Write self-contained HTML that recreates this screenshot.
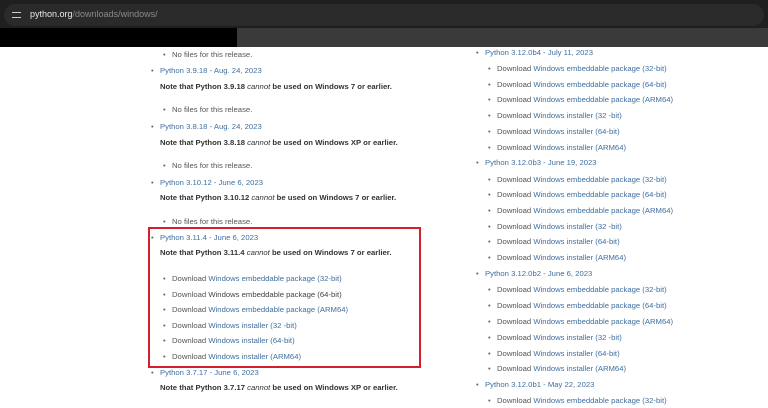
<!DOCTYPE html>
<html><head><meta charset="utf-8"><style>
*{margin:0;padding:0;box-sizing:border-box}
body{width:768px;height:408px;overflow:hidden;background:#fff;font-family:"Liberation Sans",sans-serif;font-size:7.7px;color:#555;position:relative}
.top{position:absolute;left:0;top:0;width:768px;height:28px;background:#1f1f1f}
.url{position:absolute;left:4px;top:4px;width:760px;height:22px;border-radius:11px;background:#2a2a2a}
.url span{position:absolute;left:26px;top:5px;font-size:9px;color:#e8e8e8}
.url span i{font-style:normal;color:#8a8a8a}
.ic{position:absolute;left:8px;top:8px;width:9px;height:6px;border-top:1.5px solid #ccc;border-bottom:1.5px solid #ccc}
.bar{position:absolute;left:0;top:28px;width:768px;height:19px;background:#3a3a3a}
.blk{position:absolute;left:0;top:28px;width:237px;height:19px;background:#000}
.t{position:absolute;white-space:nowrap;line-height:10px}
.t:before{content:"•";position:absolute;left:-9px;color:#666}
.n:before{content:none}
a{color:#3f6f9f;text-decoration:none}
b{color:#333}
.box{position:absolute;left:148px;top:227px;width:273px;height:141px;border:2px solid #d3202c}
</style></head><body>
<div class="top"><div class="url"><div class="ic"></div><span>python.org<i>/downloads/windows/</i></span></div></div>
<div class="bar"></div><div class="blk"></div>
<div class="box"></div>
<div class="t" style="left:172px;top:50px">No files for this release.</div>
<div class="t" style="left:160px;top:66px"><a>Python 3.9.18 - Aug. 24, 2023</a></div>
<div class="t n" style="left:160px;top:82px"><b>Note that Python 3.9.18 <i style="font-weight:normal">cannot</i> be used on Windows 7 or earlier.</b></div>
<div class="t" style="left:172px;top:105px">No files for this release.</div>
<div class="t" style="left:160px;top:122px"><a>Python 3.8.18 - Aug. 24, 2023</a></div>
<div class="t n" style="left:160px;top:138px"><b>Note that Python 3.8.18 <i style="font-weight:normal">cannot</i> be used on Windows XP or earlier.</b></div>
<div class="t" style="left:172px;top:161px">No files for this release.</div>
<div class="t" style="left:160px;top:178px"><a>Python 3.10.12 - June 6, 2023</a></div>
<div class="t n" style="left:160px;top:193px"><b>Note that Python 3.10.12 <i style="font-weight:normal">cannot</i> be used on Windows 7 or earlier.</b></div>
<div class="t" style="left:172px;top:217px">No files for this release.</div>
<div class="t" style="left:160px;top:233px"><a>Python 3.11.4 - June 6, 2023</a></div>
<div class="t n" style="left:160px;top:248px"><b>Note that Python 3.11.4 <i style="font-weight:normal">cannot</i> be used on Windows 7 or earlier.</b></div>
<div class="t" style="left:172px;top:274px">Download <a>Windows embeddable package (32-bit)</a></div>
<div class="t" style="left:172px;top:290px">Download <span style="color:#444">Windows embeddable package (64-bit)</span></div>
<div class="t" style="left:172px;top:305px">Download <a>Windows embeddable package (ARM64)</a></div>
<div class="t" style="left:172px;top:321px">Download <a>Windows installer (32 -bit)</a></div>
<div class="t" style="left:172px;top:336px">Download <a>Windows installer (64-bit)</a></div>
<div class="t" style="left:172px;top:352px">Download <a>Windows installer (ARM64)</a></div>
<div class="t" style="left:160px;top:368px"><a>Python 3.7.17 - June 6, 2023</a></div>
<div class="t n" style="left:160px;top:383px"><b>Note that Python 3.7.17 <i style="font-weight:normal">cannot</i> be used on Windows XP or earlier.</b></div>

<div class="t" style="left:485px;top:48px"><a>Python 3.12.0b4 - July 11, 2023</a></div>
<div class="t" style="left:497px;top:64px">Download <a>Windows embeddable package (32-bit)</a></div>
<div class="t" style="left:497px;top:80px">Download <a>Windows embeddable package (64-bit)</a></div>
<div class="t" style="left:497px;top:95px">Download <a>Windows embeddable package (ARM64)</a></div>
<div class="t" style="left:497px;top:111px">Download <a>Windows installer (32 -bit)</a></div>
<div class="t" style="left:497px;top:127px">Download <a>Windows installer (64-bit)</a></div>
<div class="t" style="left:497px;top:143px">Download <a>Windows installer (ARM64)</a></div>
<div class="t" style="left:485px;top:158px"><a>Python 3.12.0b3 - June 19, 2023</a></div>
<div class="t" style="left:497px;top:175px">Download <a>Windows embeddable package (32-bit)</a></div>
<div class="t" style="left:497px;top:190px">Download <a>Windows embeddable package (64-bit)</a></div>
<div class="t" style="left:497px;top:206px">Download <a>Windows embeddable package (ARM64)</a></div>
<div class="t" style="left:497px;top:222px">Download <a>Windows installer (32 -bit)</a></div>
<div class="t" style="left:497px;top:237px">Download <a>Windows installer (64-bit)</a></div>
<div class="t" style="left:497px;top:253px">Download <a>Windows installer (ARM64)</a></div>
<div class="t" style="left:485px;top:269px"><a>Python 3.12.0b2 - June 6, 2023</a></div>
<div class="t" style="left:497px;top:285px">Download <a>Windows embeddable package (32-bit)</a></div>
<div class="t" style="left:497px;top:301px">Download <a>Windows embeddable package (64-bit)</a></div>
<div class="t" style="left:497px;top:317px">Download <a>Windows embeddable package (ARM64)</a></div>
<div class="t" style="left:497px;top:333px">Download <a>Windows installer (32 -bit)</a></div>
<div class="t" style="left:497px;top:349px">Download <a>Windows installer (64-bit)</a></div>
<div class="t" style="left:497px;top:364px">Download <a>Windows installer (ARM64)</a></div>
<div class="t" style="left:485px;top:380px"><a>Python 3.12.0b1 - May 22, 2023</a></div>
<div class="t" style="left:497px;top:396px">Download <a>Windows embeddable package (32-bit)</a></div>
</body></html>
